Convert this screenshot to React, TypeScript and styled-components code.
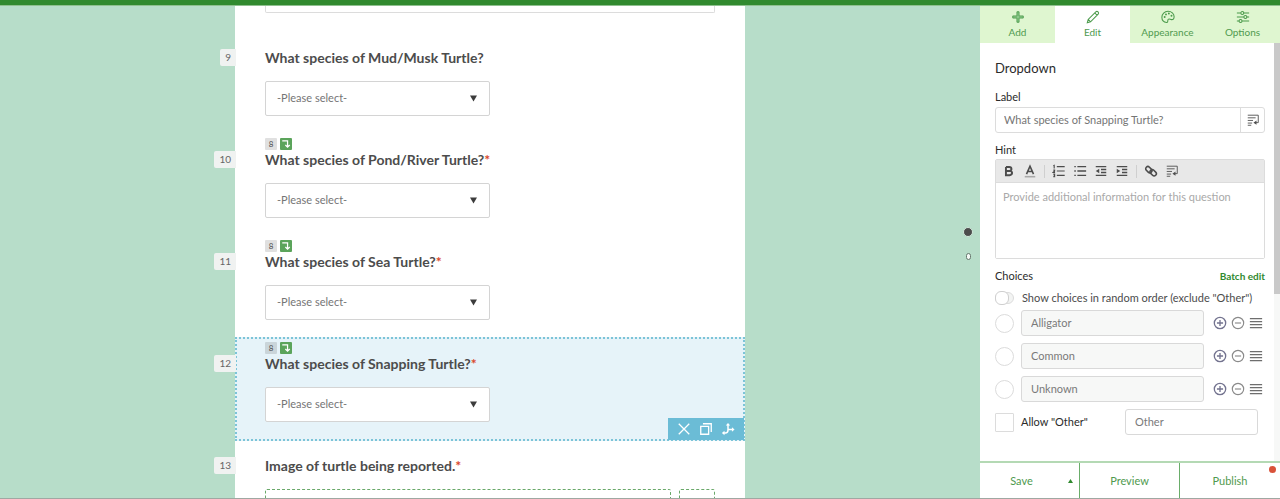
import React from "react";
import styled, { createGlobalStyle, css } from "styled-components";

const Global = createGlobalStyle`
  * { box-sizing: border-box; }
  body { margin: 0; background: #b7ddc9; }
  body, button, input, select, textarea {
    font-family: Lato, "Open Sans", sans-serif;
    font-size: 11px;
    line-height: 18px;
    color: #4c4c4c;
  }
  button { padding: 0; border: 0; background: none; cursor: pointer; }
  input, select, textarea { margin: 0; outline: none; }
`;

const Page = styled.div`
  height: 100vh;
  display: flex;
  flex-direction: column;
  overflow: hidden;
  border-bottom: 1px solid #9fa8a2;
`;
const TopBar = styled.header`
  flex: none;
  height: 6px;
  background: #318a2f;
  border-bottom: 1px solid #8fc08f;
`;
const Workspace = styled.div`
  flex: 1;
  min-height: 0;
  display: grid;
  grid-template-columns: minmax(0, 1fr) 300px;
`;
const Canvas = styled.main`
  display: grid;
  grid-template-columns: minmax(0, 1fr) minmax(0, 510px) minmax(0, 1fr);
  overflow: hidden;
  background: #b7ddc9;
`;
const Form = styled.form`
  grid-column: 2;
  background: #fff;
`;
const PageNav = styled.nav`
  display: flex;
  flex-direction: column;
  align-items: center;
  justify-self: end;
  gap: 16px;
  width: 24px;
  padding-top: 221px;
`;
const Dot = styled.button<{ $current?: boolean }>`
  border-radius: 5px;
  ${(p) =>
    p.$current
      ? css`width: 10px; height: 10px; background: #4c4c4c; border: 1px solid #d3e9dc;`
      : css`width: 5px; height: 7px; background: #f4faf6; border: 1px solid #66786e;`}
`;

const Question = styled.section<{ $selected?: boolean }>`
  position: relative;
  margin-bottom: -2px;
  padding: 3px 28px 17px;
  border: 2px dotted ${(p) => (p.$selected ? "#7cc4d8" : "transparent")};
  ${(p) => p.$selected && "background: #e6f3f9; z-index: 1;"}
`;
const EarlierAnswer = styled.div`
  height: 7px;
  margin: 0 30px 18px;
  border: 1px solid #dcdcdc;
  border-top: 0;
  border-radius: 0 0 2px 2px;
`;
const Number = styled.span`
  position: absolute;
  top: 16px;
  right: 100%;
  margin-right: 1px;
  padding: 0 5px;
  border-radius: 2px 0 0 2px;
  background: #f0f2f1;
  color: #666;
  font-size: 10px;
  line-height: 17px;
`;
const Badges = styled.div`
  display: flex;
  gap: 3px;
  height: 13px;
`;
const Badge = styled.span<{ $rule?: boolean }>`
  display: flex;
  align-items: center;
  justify-content: center;
  width: 12px;
  height: 12px;
  border-radius: 1px;
  font-size: 8px;
  line-height: 12px;
  background: ${(p) => (p.$rule ? "#5ba45b" : "rgba(0, 0, 0, 0.12)")};
`;
const QuestionLabel = styled.label`
  display: block;
  margin-bottom: 14px;
  font-size: 14px;
  font-weight: 700;
  line-height: 18px;
`;
const Required = styled.span`
  color: #d9472b;
`;
const SelectBox = styled.div`
  display: grid;
  width: 225px;
  max-width: 100%;
  align-items: center;
  & > * { grid-area: 1 / 1; }
  & > svg { justify-self: end; margin-right: 13px; pointer-events: none; }
`;
const Select = styled.select`
  appearance: none;
  width: 100%;
  height: 35px;
  padding: 0 11px 2px;
  border: 1px solid #d4d4d4;
  border-radius: 2px;
  background: #fff;
  color: #757575;
`;
const Actions = styled.div`
  position: absolute;
  right: -1px;
  bottom: -1px;
  display: flex;
  gap: 8px;
  padding: 4px 9px;
  background: #6bbcd6;
  button { display: flex; }
`;
const Uploads = styled.div`
  display: grid;
  grid-template-columns: 1fr 36px;
  gap: 8px;
`;
const DropArea = styled.div`
  height: 40px;
  border: 1px dashed #6aa96a;
  border-radius: 2px;
`;

const Panel = styled.aside`
  display: flex;
  flex-direction: column;
  min-height: 0;
  background: #fff;
`;
const Tabs = styled.div`
  flex: none;
  display: grid;
  grid-template-columns: repeat(4, 1fr);
`;
const Tab = styled.button<{ $active?: boolean }>`
  display: flex;
  flex-direction: column;
  align-items: center;
  height: 37px;
  padding-top: 4px;
  font-size: 10px;
  line-height: 16px;
  color: #4f9a4f;
  background: ${(p) => (p.$active ? "#fff" : "#dff6d0")};
`;
const Scroller = styled.div`
  flex: 1;
  min-height: 0;
  display: flex;
`;
const Settings = styled.div`
  flex: 1;
  min-width: 0;
  overflow: hidden;
  padding: 15px 9px 0 15px;
`;
const Track = styled.div`
  width: 6px;
  background: #f7f8f7;
`;
const Thumb = styled.div`
  height: 60%;
  background: #c9c9c9;
`;
const Title = styled.h2`
  margin: 0 0 10px;
  font-size: 13px;
  font-weight: 400;
  line-height: 20px;
  color: #2b2b2b;
`;
const FieldLabel = styled.label`
  display: block;
  color: #2b2b2b;
`;
const LabelField = styled.div`
  display: flex;
  height: 26px;
  margin: 1px 0 8px;
  border: 1px solid #dcdcdc;
  border-radius: 3px;
  button {
    display: flex;
    align-items: center;
    justify-content: center;
    width: 24px;
    border-left: 1px solid #dcdcdc;
  }
`;
const BareInput = styled.input`
  flex: 1;
  min-width: 0;
  padding: 0 8px;
  border: 0;
  background: none;
  color: #757575;
`;
const Editor = styled.div`
  height: 100px;
  display: flex;
  flex-direction: column;
  margin-bottom: 8px;
  border: 1px solid #dcdcdc;
  border-radius: 2px;
`;
const Toolbar = styled.div`
  display: flex;
  align-items: center;
  gap: 7px;
  height: 23px;
  padding: 0 6px;
  background: #e8e8e8;
  border-bottom: 1px solid #dcdcdc;
  button { display: flex; }
`;
const Divider = styled.span`
  width: 1px;
  height: 13px;
  background: #cfcfcf;
`;
const HintText = styled.textarea`
  flex: 1;
  padding: 5px 7px;
  border: 0;
  resize: none;
  &::placeholder { color: #a9a9a9; opacity: 1; }
`;
const ChoicesHead = styled.div`
  display: flex;
  justify-content: space-between;
  margin-bottom: 4px;
  color: #2b2b2b;
  button { font-size: 10px; font-weight: 700; color: #318a2f; }
`;
const ToggleRow = styled.label`
  display: flex;
  align-items: center;
  gap: 8px;
  height: 18px;
  margin-bottom: 3px;
`;
const Toggle = styled.input`
  appearance: none;
  display: flex;
  align-items: center;
  width: 19px;
  height: 12px;
  border: 1px solid #dcdcdc;
  border-radius: 6px;
  background: #f3f4f3;
  &::before {
    content: "";
    width: 12px;
    height: 12px;
    margin-left: -1px;
    border: 1px solid #cfcfcf;
    border-radius: 6px;
    background: #fff;
  }
`;
const ChoiceList = styled.div`
  display: flex;
  flex-direction: column;
  gap: 7px;
`;
const Row = styled.div`
  display: flex;
  align-items: center;
  gap: 7px;
`;
const Mark = styled.input`
  appearance: none;
  flex: none;
  width: 19px;
  height: 19px;
  border: 1px solid #dcdcdc;
  border-radius: ${(p) => (p.type === "radio" ? "10px" : "1px")};
  background: #fff;
`;
const TextInput = styled.input<{ $filled?: boolean }>`
  flex: 1;
  min-width: 0;
  height: 26px;
  padding: 0 9px 2px;
  border: 1px solid #d9d9d9;
  border-radius: 3px;
  background: ${(p) => (p.$filled ? "#f7f8f7" : "#fff")};
  color: #7a7a7a;
`;
const RowTools = styled.div`
  display: flex;
  gap: 4px;
  padding: 0 2px;
  button { display: flex; }
`;
const OtherRow = styled(Row)`
  padding-right: 7px;
  label { flex: 0 0 97px; color: #2b2b2b; }
`;
const Footer = styled.footer`
  flex: none;
  display: grid;
  grid-template-columns: repeat(3, 1fr);
  height: 37px;
  border-top: 2px solid #b4d9b4;
`;
const FooterButton = styled.button<{ $menu?: boolean }>`
  position: relative;
  display: flex;
  align-items: center;
  justify-content: center;
  color: #4f9a4f;
  &:not(:last-child) { border-right: 1px solid #6aad6a; }
  ${(p) => p.$menu && "padding-left: 24px; gap: 35px;"}
`;
const Unpublished = styled.span`
  position: absolute;
  top: 3px;
  right: 4px;
  width: 7px;
  height: 7px;
  border-radius: 4px;
  background: #d9523a;
`;

const Icon = ({ size = 14, color = "#4c4c4c", width = 1, children }: {
  size?: number; color?: string; width?: number; children: React.ReactNode;
}) => (
  <svg width={size} height={size} viewBox="0 0 16 16" fill="none" stroke={color} strokeWidth={width} aria-hidden="true">
    {children}
  </svg>
);

const Piping = (
  <>
    <path d="M2 2.500H14V11H11M2 5.500H11M2 8.500H8M2 11.500H7M2 14H6" />
    <path d="M12 8.500V13.500L8.500 11Z" fill="#4c4c4c" stroke="none" />
  </>
);
const NumberedList = <path d="M5.500 3H14.500M5.500 8H14.500M5.500 13H14.500M1.500 2 2.500 1.500V5M1.500 7H3V8L1.500 9.500H3.500M1.500 11.500H3V14.500H1.500M2 13H3" />;
const BulletList = <path d="M5 3H15M5 8H15M5 13H15M1.500 3H3.200M1.500 8H3.200M1.500 13H3.200" />;

const FormQuestion = ({ n, text, badges, required = true, selected, children }: {
  n: number; text: string; badges?: boolean; required?: boolean; selected?: boolean; children?: React.ReactNode;
}) => (
  <Question $selected={selected}>
    <Number>{n}</Number>
    <Badges>
      {badges && (
        <>
          <Badge>8</Badge>
          <Badge $rule>
            <Icon size={10} color="#fff" width={2}><path d="M2 3H10.500V12M7 9.500 10.500 13 14 9.500" /></Icon>
          </Badge>
        </>
      )}
    </Badges>
    <QuestionLabel htmlFor={`q${n}`}>
      {text}{required && <Required>*</Required>}
    </QuestionLabel>
    {children || (
      <SelectBox>
        <Select id={`q${n}`}><option>-Please select-</option></Select>
        <svg width="7" height="7" viewBox="0 0 7 7" aria-hidden="true"><path d="M0 0.500H7L3.500 6.500Z" fill="#3c3c3c" /></svg>
      </SelectBox>
    )}
    {selected && (
      <Actions>
        <button type="button" aria-label="Delete">
          <Icon color="#fff" width={1.5}><path d="M2 2 14 14M14 2 2 14" /></Icon>
        </button>
        <button type="button" aria-label="Duplicate">
          <Icon color="#fff" width={1.5}><path d="M2 5H11V14H2ZM4.500 2H14V11.500" /></Icon>
        </button>
        <button type="button" aria-label="Set rule">
          <Icon color="#fff" width={1.7}>
            <path d="M8 3V9Q8 12.500 5 12.500H3M8 8.500H13" />
            <path d="M5.500 4 8 1 10.500 4ZM12.500 6 15.500 8.500 12.500 11ZM4 10 1 12.500 4 15Z" fill="#fff" stroke="none" />
          </Icon>
        </button>
      </Actions>
    )}
  </Question>
);

export default function App() {
  return (
    <>
      <Global />
      <Page>
        <TopBar />
        <Workspace>
          <Canvas>
            <Form>
              <EarlierAnswer />
              <FormQuestion n={9} text="What species of Mud/Musk Turtle?" required={false} />
              <FormQuestion n={10} text="What species of Pond/River Turtle?" badges />
              <FormQuestion n={11} text="What species of Sea Turtle?" badges />
              <FormQuestion n={12} text="What species of Snapping Turtle?" badges selected />
              <FormQuestion n={13} text="Image of turtle being reported.">
                <Uploads id="q13"><DropArea /><DropArea /></Uploads>
              </FormQuestion>
            </Form>
            <PageNav aria-label="Pages">
              <Dot $current aria-label="Page 1" />
              <Dot aria-label="Page 2" />
            </PageNav>
          </Canvas>
          <Panel>
            <Tabs role="tablist">
              <Tab role="tab">
                <Icon color="#4a9a4a"><path d="M6.800 2H9.200V6.800H14V9.200H9.200V14H6.800V9.200H2V6.800H6.800Z" fill="#8cc98a" /></Icon>Add
              </Tab>
              <Tab role="tab" $active aria-selected="true">
                <Icon color="#4a9a4a" width={1.2}><path d="M1.500 14.500 2.500 10.800 11.200 2.100Q12.500 1 13.800 2.200 15 3.500 13.900 4.800L5.200 13.500ZM2.500 10.800 5.200 13.500M10 3.300 12.700 6" /></Icon>Edit
              </Tab>
              <Tab role="tab">
                <Icon color="#4a9a4a" width={1.2}>
                  <path d="M6.500 14.300C3 14 1 11.500 1 8.300 1 4.500 4 1.500 8 1.500S15 4.200 15 7.800C15 10 13.800 11.200 12 11 10.500 10.800 9.500 9.800 8.500 10.500 7 11.500 8.500 14.500 6.500 14.300Z" />
                  <circle cx="4.200" cy="8" r="0.500" /><circle cx="5.700" cy="5" r="0.500" /><circle cx="9" cy="4" r="0.500" /><circle cx="12" cy="6.500" r="0.500" />
                </Icon>Appearance
              </Tab>
              <Tab role="tab">
                <Icon color="#4a9a4a" width={1.2}>
                  <path d="M1 3.500H5.500M9 3.500H15M1 8H9M12.500 8H15M1 12.500H3.500M7 12.500H15" />
                  <circle cx="7.200" cy="3.500" r="1.700" /><circle cx="10.700" cy="8" r="1.700" /><circle cx="5.200" cy="12.500" r="1.700" />
                </Icon>Options
              </Tab>
            </Tabs>
            <Scroller>
              <Settings>
                <Title>Dropdown</Title>
                <FieldLabel htmlFor="label">Label</FieldLabel>
                <LabelField>
                  <BareInput id="label" defaultValue="What species of Snapping Turtle?" />
                  <button aria-label="Insert answer"><Icon>{Piping}</Icon></button>
                </LabelField>
                <FieldLabel htmlFor="hint">Hint</FieldLabel>
                <Editor>
                  <Toolbar>
                    <button aria-label="Bold"><Icon width={2.2}><path d="M4.500 3.500H8.200Q10.800 3.700 10.800 5.700T8.200 7.900H4.500M4.500 7.900H8.600Q11.500 8.200 11.500 10.300T8.600 12.800H4.500V3.500" /></Icon></button>
                    <button aria-label="Text color"><Icon width={1.8}><path d="M4 11.500 8 2.500 12 11.500M5.500 8.500H10.500" /><path d="M2 14.500H14" stroke="#a8a8a8" /></Icon></button>
                    <Divider />
                    <button aria-label="Numbered list"><Icon width={1.3}>{NumberedList}</Icon></button>
                    <button aria-label="Bulleted list"><Icon width={1.5}>{BulletList}</Icon></button>
                    <button aria-label="Outdent"><Icon width={1.6}><path d="M2 3H14M8 6.300H14M8 9.700H14M2 13H14" /><path d="M6 5.500V10.500L2 8Z" fill="#4c4c4c" stroke="none" /></Icon></button>
                    <button aria-label="Indent"><Icon width={1.6}><path d="M2 3H14M8 6.300H14M8 9.700H14M2 13H14" /><path d="M2 5.500V10.500L6 8Z" fill="#4c4c4c" stroke="none" /></Icon></button>
                    <Divider />
                    <button aria-label="Link"><Icon width={1.8}><rect x="1.500" y="4" width="8" height="5" rx="2.500" transform="rotate(45 5.500 6.500)" /><rect x="6.500" y="7.500" width="8" height="5" rx="2.500" transform="rotate(45 10.500 10)" /></Icon></button>
                    <button aria-label="Insert answer"><Icon>{Piping}</Icon></button>
                  </Toolbar>
                  <HintText id="hint" placeholder="Provide additional information for this question" />
                </Editor>
                <ChoicesHead>
                  <span>Choices</span>
                  <button>Batch edit</button>
                </ChoicesHead>
                <ToggleRow>
                  <Toggle type="checkbox" role="switch" />
                  Show choices in random order (exclude "Other")
                </ToggleRow>
                <ChoiceList>
                  {["Alligator", "Common", "Unknown"].map((c) => (
                    <Row key={c}>
                      <Mark type="radio" name="default" aria-label={`Default to ${c}`} />
                      <TextInput $filled defaultValue={c} aria-label="Choice" />
                      <RowTools>
                        <button aria-label="Add choice"><Icon color="#73738f" width={1.5}><circle cx="8" cy="8" r="6.500" /><path d="M8 4.500V11.500M4.500 8H11.500" /></Icon></button>
                        <button aria-label="Remove choice"><Icon color="#8a8a8a" width={1.3}><circle cx="8" cy="8" r="6.500" /><path d="M4.500 8H11.500" /></Icon></button>
                        <button aria-label="Reorder"><Icon color="#6e6e6e" width={1.5}><path d="M1 3H15M1 6.400H15M1 9.800H15M1 13.200H15" /></Icon></button>
                      </RowTools>
                    </Row>
                  ))}
                  <OtherRow>
                    <Mark type="checkbox" id="other" />
                    <label htmlFor="other">Allow "Other"</label>
                    <TextInput defaultValue="Other" aria-label="Other text" />
                  </OtherRow>
                </ChoiceList>
              </Settings>
              <Track aria-hidden="true"><Thumb /></Track>
            </Scroller>
            <Footer>
              <FooterButton $menu>
                Save
                <svg width="5" height="4" viewBox="0 0 5 4" aria-hidden="true"><path d="M2.500 0 5 4H0Z" fill="#318a2f" /></svg>
              </FooterButton>
              <FooterButton>Preview</FooterButton>
              <FooterButton>Publish<Unpublished /></FooterButton>
            </Footer>
          </Panel>
        </Workspace>
      </Page>
    </>
  );
}
